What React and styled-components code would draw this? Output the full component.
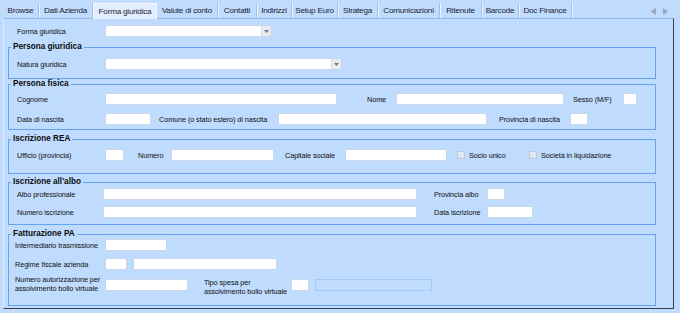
import React from "react";
import styled, { createGlobalStyle, css } from "styled-components";

const Global = createGlobalStyle`
  html, body { margin: 0; padding: 0; background: #bfdbfe; }
  body { font-family: "Liberation Sans", Arial, sans-serif; color: #111; }
`;

const Screen = styled.div`
  width: 680px;
  height: 313px;
  box-sizing: border-box;
  padding-top: 3px;
  background: #bfdbfe;
  overflow: hidden;
`;

const TabStrip = styled.div`
  display: flex;
  align-items: flex-start;
  height: 15px;
  margin-left: 3px;
`;

const Tab = styled.div`
  flex: none;
  width: ${(p) => p.$w}px;
  height: 15px;
  box-sizing: border-box;
  display: flex;
  align-items: center;
  justify-content: center;
  font-size: 8.1px;
  letter-spacing: -0.2px;
  color: #1a2230;
  border-right: 1px solid #a9bfdc;
  box-shadow: 1px 0 0 #e9f2fd;
  ${(p) =>
    p.$active &&
    css`
      height: 16px;
      background: #e2eeff;
      border: 1px solid #f6faff;
      border-bottom: none;
      box-shadow: none;
      position: relative;
      z-index: 1;
    `}
`;

const Arrows = styled.div`
  margin-left: auto;
  margin-right: 12px;
  display: flex;
  gap: 7px;
  height: 15px;
  align-items: center;
  padding-top: 1px;
`;

const Panel = styled.div`
  margin-left: 3px;
  width: 671px;
  height: 291px;
  box-sizing: border-box;
  border-top: 1px solid #94b9e8;
  border-left: 1px solid #dceafc;
  border-right: 1px solid #3b3f45;
  border-bottom: 1px solid #3b3f45;
  padding: 6px 0 0 4px;
`;

const Row = styled.div`
  display: flex;
  align-items: ${(p) => (p.$top ? "flex-start" : "center")};
  padding-left: ${(p) => p.$pl ?? 8}px;
  margin-top: ${(p) => p.$mt || 0}px;
  min-height: 12px;
`;

const Label = styled.span`
  flex: none;
  width: ${(p) => p.$w}px;
  margin-left: ${(p) => p.$ml || 0}px;
  margin-top: ${(p) => p.$mtop || 0}px;
  font-size: 7.3px;
  letter-spacing: -0.1px;
  line-height: 9px;
  white-space: nowrap;
  color: #111;
`;

const Field = styled.div`
  flex: none;
  width: ${(p) => p.$w}px;
  height: 12px;
  margin-left: ${(p) => p.$ml || 0}px;
  margin-top: ${(p) => p.$mtop || 0}px;
  box-sizing: border-box;
  background: #ffffff;
  border: 1px solid #c7d5e7;
  display: flex;
  justify-content: flex-end;
  ${(p) =>
    p.$disabled &&
    css`
      background: transparent;
      border-color: #a9c8ef;
    `}
`;

const DropButton = styled.div`
  width: 9px;
  height: 100%;
  background: #e6ecf3;
  border-left: 1px solid #d3dce8;
  display: flex;
  align-items: center;
  justify-content: center;
`;

const Group = styled.fieldset`
  width: 648px;
  box-sizing: border-box;
  margin: ${(p) => p.$mt || 0}px 0 0 0;
  padding: ${(p) => p.$pt || 0}px 0 ${(p) => p.$pb || 0}px 0;
  border: 1px solid #67a2ee;
  min-width: 0;
`;

const Legend = styled.legend`
  margin-left: 2px;
  padding: 0 2px;
  font-size: 8.2px;
  font-weight: bold;
  line-height: 10px;
  color: #0c0c0c;
`;

const Check = styled.div`
  flex: none;
  display: flex;
  align-items: center;
  gap: 4px;
  width: ${(p) => (p.$w ? p.$w + "px" : "auto")};
  margin-left: ${(p) => p.$ml || 0}px;
`;

const CheckBox = styled.span`
  width: 8px;
  height: 8px;
  box-sizing: border-box;
  background: #e2e7ed;
  border: 1px solid #bfc9d4;
`;

const CheckText = styled(Label)`
  width: auto;
`;

const Combo = ({ w, ml }) => (
  <Field $w={w} $ml={ml}>
    <DropButton>
      <svg width="5" height="3" viewBox="0 0 5 3">
        <path d="M0 0h5L2.5 3z" fill="#6d7b8c" />
      </svg>
    </DropButton>
  </Field>
);

const tabs = [
  ["Browse", 36],
  ["Dati Azienda", 54],
  ["Forma giuridica", 64, true],
  ["Valute di conto", 61],
  ["Contatti", 39],
  ["Indirizzi", 35],
  ["Setup Euro", 46],
  ["Stratega", 40],
  ["Comunicazioni", 62],
  ["Ritenute", 42],
  ["Barcode", 37],
  ["Doc Finance", 53],
];

export default function App() {
  return (
    <>
      <Global />
      <Screen>
        <TabStrip>
          {tabs.map(([t, w, a]) => (
            <Tab key={t} $w={w} $active={a}>
              {t}
            </Tab>
          ))}
          <Arrows>
            <svg width="5" height="7" viewBox="0 0 5 7">
              <path d="M5 0v7L0 3.5z" fill="#9aa9bb" />
            </svg>
            <svg width="5" height="7" viewBox="0 0 5 7">
              <path d="M0 0v7L5 3.5z" fill="#9aa9bb" />
            </svg>
          </Arrows>
        </TabStrip>
        <Panel>
          <Row $pl={9}>
            <Label $w={88}>Forma giuridica</Label>
            <Combo w={167} />
          </Row>

          <Group $mt={5} $pt={6} $pb={8}>
            <Legend>Persona giuridica</Legend>
            <Row>
              <Label $w={88}>Natura giuridica</Label>
              <Combo w={237} />
            </Row>
          </Group>

          <Group $mt={0} $pt={4} $pb={4}>
            <Legend>Persona fisica</Legend>
            <Row>
              <Label $w={88}>Cognome</Label>
              <Field $w={232} />
              <Label $w={29} $ml={30}>Nome</Label>
              <Field $w={168} />
              <Label $w={50} $ml={9}>Sesso (M/F)</Label>
              <Field $w={14} />
            </Row>
            <Row $mt={8}>
              <Label $w={88}>Data di nascita</Label>
              <Field $w={46} />
              <Label $w={119} $ml={8}>Comune (o stato estero) di nascita</Label>
              <Field $w={209} />
              <Label $w={71} $ml={12}>Provincia di nascita</Label>
              <Field $w={18} />
            </Row>
          </Group>

          <Group $mt={4} $pt={5} $pb={12}>
            <Legend>Iscrizione REA</Legend>
            <Row>
              <Label $w={88}>Ufficio (provincia)</Label>
              <Field $w={19} />
              <Label $w={33} $ml={14}>Numero</Label>
              <Field $w={103} />
              <Label $w={60} $ml={11}>Capitale sociale</Label>
              <Field $w={102} />
              <Check $w={72} $ml={10}>
                <CheckBox />
                <CheckText>Socio unico</CheckText>
              </Check>
              <Check>
                <CheckBox />
                <CheckText>Società in liquidazione</CheckText>
              </Check>
            </Row>
          </Group>

          <Group $mt={3} $pt={1} $pb={6}>
            <Legend>Iscrizione all'albo</Legend>
            <Row>
              <Label $w={86}>Albo professionale</Label>
              <Field $w={314} />
              <Label $w={53} $ml={17}>Provincia albo</Label>
              <Field $w={18} />
            </Row>
            <Row $mt={6}>
              <Label $w={86}>Numero iscrizione</Label>
              <Field $w={314} />
              <Label $w={53} $ml={17}>Data iscrizione</Label>
              <Field $w={46} />
            </Row>
          </Group>

          <Group $mt={4} $pt={0} $pb={9}>
            <Legend>Fatturazione PA</Legend>
            <Row $pl={6}>
              <Label $w={90}>Intermediario trasmissione</Label>
              <Field $w={62} />
            </Row>
            <Row $pl={6} $mt={7}>
              <Label $w={90}>Regime fiscale azienda</Label>
              <Field $w={22} />
              <Field $w={144} $ml={6} />
            </Row>
            <Row $pl={6} $mt={5} $top>
              <Label $w={90}>
                Numero autorizzazione per
                <br />
                assolvimento bollo virtuale
              </Label>
              <Field $w={83} $mtop={4} />
              <Label $w={87} $ml={16} $mtop={3}>
                Tipo spesa per
                <br />
                assolvimento bollo virtuale
              </Label>
              <Field $w={18} $mtop={4} />
              <Field $w={117} $ml={6} $mtop={4} $disabled />
            </Row>
          </Group>
        </Panel>
      </Screen>
    </>
  );
}
